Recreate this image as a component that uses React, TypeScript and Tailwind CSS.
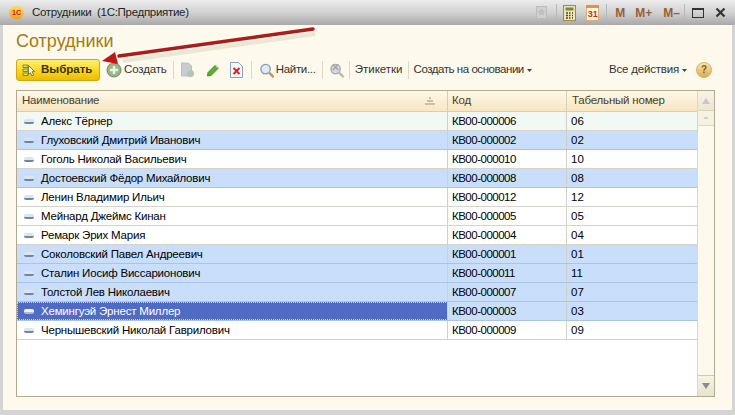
import React from "react";

const rows: [string, string, string, string][] = [
  ["Алекс Тёрнер", "КВ00-000006", "06", "tint"],
  ["Глуховский Дмитрий Иванович", "КВ00-000002", "02", "sel"],
  ["Гоголь Николай Васильевич", "КВ00-000010", "10", "plain"],
  ["Достоевский Фёдор Михайлович", "КВ00-000008", "08", "sel"],
  ["Ленин Владимир Ильич", "КВ00-000012", "12", "plain"],
  ["Мейнард Джеймс Кинан", "КВ00-000005", "05", "plain"],
  ["Ремарк Эрих Мария", "КВ00-000004", "04", "plain"],
  ["Соколовский Павел Андреевич", "КВ00-000001", "01", "sel"],
  ["Сталин Иосиф Виссарионович", "КВ00-000011", "11", "sel"],
  ["Толстой Лев Николаевич", "КВ00-000007", "07", "sel"],
  ["Хемингуэй Эрнест Миллер", "КВ00-000003", "03", "cur"],
  ["Чернышевский Николай Гаврилович", "КВ00-000009", "09", "plain"],
];

function Sep() {
  return <div className="w-px h-[18px] bg-[#e0d8c0] shrink-0" />;
}

function Caret() {
  return <svg width="5" height="3" viewBox="0 0 5 3" className="ml-[3px] shrink-0"><path d="M0 0h5L2.500 3z" fill="#444" /></svg>;
}

function Minus({ light }: { light?: boolean }) {
  return (
    <span className={`w-[10px] h-[5px] rounded-[2px] shrink-0 border-b-2 ${light ? "bg-[#eef2fa] border-[#a8b8e4]" : "bg-[#dde4ee] border-[#6c86a6]"}`} />
  );
}

function Row({ r }: { r: [string, string, string, string] }) {
  const [name, code, num, kind] = r;
  const bg = kind === "sel" ? "bg-[#c8defa]" : kind === "tint" ? "bg-[#f2f9f4]" : kind === "cur" ? "bg-[#c8defa]" : "bg-white";
  const line = kind === "plain" || kind === "tint" ? "border-[#d4d4cc]" : "border-[#a9c4e4]";
  return (
    <div className={`flex h-[19px] border-b ${bg} ${line} text-black`}>
      <div className={`w-[431px] shrink-0 flex items-center pl-[7px] gap-[7px] border-r border-[#d0d0c8] tracking-[-0.2px] ${kind === "cur" ? "bg-[#4f6bc4] text-white outline-1 -outline-offset-1 outline-dotted outline-[#c9d3ee]" : ""}`}>
        <Minus light={kind === "cur"} />
        <span className="whitespace-nowrap pt-[2px]">{name}</span>
      </div>
      <div className="w-[119px] shrink-0 flex items-center pl-[4px] pt-[2px] border-r border-[#d0d0c8] tracking-[-0.5px]">{code}</div>
      <div className="flex-1 flex items-center pl-[4px] pt-[2px]">{num}</div>
    </div>
  );
}

function Scrollbar() {
  return (
    <div className="w-[17px] shrink-0 flex flex-col bg-[#fdf9ec] border-l border-[#dcd8c8]">
      <div className="h-[20px] flex items-center justify-center border-b border-[#d8d2bc] bg-gradient-to-b from-[#f8f4e4] to-[#ece6d2]">
        <svg width="8" height="6" viewBox="0 0 8 6"><path d="M4 0l4 6H0z" fill="#c6c8cc" /></svg>
      </div>
      <div className="h-[15px] flex items-center justify-center border-b border-[#ddd8c4] bg-[#f6f2e2]">
        <span className="w-[4px] h-[2px] bg-[#d4cfbc]" />
      </div>
      <div className="flex-1" />
      <div className="h-[21px] flex items-center justify-center border-t border-[#cfcab4] bg-gradient-to-b from-[#f8f4e4] to-[#e8e2ce]">
        <svg width="8" height="6" viewBox="0 0 8 6"><path d="M0 0h8L4 6z" fill="#8a8a8a" /></svg>
      </div>
    </div>
  );
}

export default function App() {
  return (
    <div className="relative w-[735px] h-[415px] overflow-hidden bg-[#d4d4d4] text-[11.5px] leading-none text-[#333]" style={{ fontFamily: '"Liberation Sans", Arial, sans-serif' }}>
      {/* title bar */}
      <div className="h-[25px] flex items-center bg-gradient-to-b from-[#ececec] via-[#d2d2d2] to-[#a8a8a8]">
        <div className="w-[32px] flex justify-center pl-[1px] shrink-0">
          <span className="w-[15px] h-[13px] rounded-full bg-gradient-to-b from-[#ffdc60] to-[#f0a020] flex items-center justify-center text-[7px] font-bold text-[#c02010]">1С</span>
        </div>
        <span className="text-[#222] whitespace-nowrap tracking-[-0.3px]">Сотрудники &nbsp;(1С:Предприятие)</span>
        <div className="ml-auto flex items-center h-full">
          <svg width="13" height="15" viewBox="0 0 13 15"><path d="M1.500 1.500h10v12h-10z" fill="#d0d0d0" stroke="#bcbcbc" /><path d="M6.500 4l1 2 2 .3-1.500 1.400.4 2.100-1.900-1-1.900 1 .4-2.100L3.500 6.300l2-.3z" fill="#c4c4c4" stroke="#aaa" strokeWidth=".5" /></svg>
          <div className="w-px h-[18px] bg-[#b8b8b8] ml-[8px]" />
          <svg width="13" height="16" viewBox="0 0 13 16" className="ml-[6px]"><rect x=".5" y=".5" width="12" height="15" fill="#f2e6b0" stroke="#a08a40" /><rect x="2.500" y="2.500" width="8" height="3" fill="#6e8a50" /><path d="M3 8h2M6 8h1.500M9 8h1M3 10.500h2M6 10.500h1.500M9 10.500h1M3 13h2M6 13h1.500M9 13h1" stroke="#444" strokeWidth="1.300" /></svg>
          <span className="relative ml-[10px] w-[13px] h-[16px] bg-[#fff5dc] border border-[#d8b080] flex items-end justify-center text-[9px] text-[#c83010] font-bold leading-[11px]">31<span className="absolute -top-[1px] left-[-1px] right-[-1px] h-[3px] bg-[#e89040]" /></span>
          <div className="w-px h-[18px] bg-[#b8b8b8] ml-[7px]" />
          <div className="flex items-center text-[#96603a] font-bold text-[12px] ml-[8px]">
            <span>M</span>
            <span className="ml-[10px]">M+</span>
            <span className="ml-[11px]">M–</span>
          </div>
          <div className="w-px h-[18px] bg-[#b8b8b8] ml-[4px]" />
          <span className="w-[12px] h-[10px] border border-[#333] border-t-2 ml-[7px]" />
          <svg width="11" height="11" viewBox="0 0 11 11" className="ml-[11px] mr-[9px]"><path d="M1.500 1.500l8 8M9.500 1.500l-8 8" stroke="#333" strokeWidth="2.200" /></svg>
        </div>
      </div>

      {/* window body */}
      <div className="mx-[3px] h-[385px] w-[729px] bg-[#fdf9ec] flex flex-col px-[13px]">
        <div className="h-[31px] flex items-end text-[18px] text-[#a67c10] pb-[6px]">Сотрудники</div>

        {/* toolbar */}
        <div className="h-[22px] mt-[3px] flex items-center">
          <div className="w-[84px] h-[22px] rounded-[3px] border border-[#d0a810] bg-gradient-to-b from-[#fff070] via-[#fad820] to-[#eebb00] flex items-center pl-[5px] gap-[4px] font-bold text-[#3a3000] shrink-0">
            <svg width="15" height="15" viewBox="0 0 15 15"><path d="M1 2h5v2.500H1zM1 6h5v2.500H1zM1 10h5v2.500H1z" fill="#d8e070" stroke="#6a7a20" strokeWidth=".8" /><path d="M6.500 2.500l6 6-2.500.3 1.600 3.200-1.700.8-1.500-3.200L6.500 11.500z" fill="#fff" stroke="#5a6a20" strokeWidth=".8" /></svg>
            Выбрать
          </div>
          <svg width="16" height="16" viewBox="0 0 16 16" className="ml-[6px] shrink-0"><circle cx="8" cy="8" r="7" fill="#9ab58c" stroke="#77856e" /><path d="M8 4v8M4 8h8" stroke="#eef6e0" strokeWidth="2.400" /></svg>
          <span className="ml-[2px] whitespace-nowrap tracking-[-0.15px]">Создать</span>
          <div className="ml-[6px]"><Sep /></div>
          <svg width="15" height="16" viewBox="0 0 15 16" className="ml-[6px] shrink-0"><path d="M1.500 1h7l3 3v10h-10z" fill="#c4cdd2" stroke="#b8bfc2" /><circle cx="10.500" cy="11.500" r="3.500" fill="#b6c4b4" /></svg>
          <svg width="14" height="14" viewBox="0 0 14 14" className="ml-[11px] shrink-0"><path d="M2 9.500L9.500 2l3 3L5 12.500l-3.500.5z" fill="#5cb030" stroke="#2f7a1c" strokeWidth=".8" /><path d="M9.500 2l3 3" stroke="#cfe8a0" strokeWidth="1.200" /></svg>
          <svg width="13" height="16" viewBox="0 0 13 16" className="ml-[10px] shrink-0"><path d="M.5.500h8l4 4v11H.5z" fill="#f5f7fb" stroke="#8ea0bc" /><path d="M3.500 6l6 6M9.500 6l-6 6" stroke="#cc2a20" strokeWidth="2" /></svg>
          <div className="ml-[8px]"><Sep /></div>
          <svg width="16" height="17" viewBox="0 0 17 17" className="ml-[7px] shrink-0"><circle cx="7" cy="7" r="5" fill="#dcebf8" stroke="#8a9aac" strokeWidth="1.400" /><path d="M11 11l4.500 4.500" stroke="#c89048" strokeWidth="2.400" /></svg>
          <span className="ml-[1px] whitespace-nowrap tracking-[-0.3px]">Найти...</span>
          <div className="ml-[6px]"><Sep /></div>
          <svg width="16" height="17" viewBox="0 0 17 17" className="ml-[6px] shrink-0"><circle cx="7" cy="7" r="5" fill="#d4d8da" stroke="#a8aeb2" strokeWidth="1.400" /><path d="M11 11l4.500 4.500" stroke="#bcb8b0" strokeWidth="2.400" /><path d="M4 2l6 6M10 2L4 8" stroke="#a8a0a0" strokeWidth="1.400" /></svg>
          <div className="ml-[4px]"><Sep /></div>
          <span className="ml-[5px] whitespace-nowrap">Этикетки</span>
          <div className="ml-[5px]"><Sep /></div>
          <span className="ml-[5px] whitespace-nowrap tracking-[-0.45px]">Создать на основании</span>
          <Caret />
          <span className="ml-auto whitespace-nowrap tracking-[-0.2px]">Все действия</span>
          <Caret />
          <span className="ml-[9px] mr-[7px] w-[16px] h-[16px] rounded-full bg-gradient-to-b from-[#fbe8b0] to-[#e0a850] border border-[#d8b060] flex items-center justify-center text-[10px] font-bold text-[#7a5a20]">?</span>
        </div>

        {/* table */}
        <div className="mt-[9px] h-[307px] w-[699px] flex border border-[#b0aa90] bg-white">
          <div className="flex-1 flex flex-col min-w-0">
            <div className="h-[21px] flex items-stretch bg-gradient-to-b from-[#fdf8ea] to-[#f8e6c0] border-b border-[#d8ceb0] text-[#4a4020] tracking-[-0.2px]">
              <div className="w-[431px] flex items-center pl-[5px] pr-[11px] border-r border-[#d8ceb0] shrink-0">
                <span>Наименование</span>
                <svg width="12" height="8" viewBox="0 0 12 8" className="ml-auto"><path d="M5 0h2v2H5zM3 3h6v2H3zM1 6h10v2H1z" fill="#c8c0a4" /></svg>
              </div>
              <div className="w-[119px] flex items-center pl-[4px] border-r border-[#d8ceb0] shrink-0">Код</div>
              <div className="flex-1 flex items-center pl-[5px]">Табельный номер</div>
            </div>
            {rows.map((r) => <Row key={r[1]} r={r} />)}
          </div>
          <Scrollbar />
        </div>
      </div>

      {/* annotation arrow */}
      <svg className="absolute left-[95px] top-[22px] pointer-events-none" width="230" height="50" viewBox="0 0 230 50">
        <path d="M218 8 L26 35" stroke="#e4e0cc" strokeWidth="4" opacity=".7" transform="translate(2,4)" />
        <path d="M218 7 L24 34" stroke="#ab1c1c" strokeWidth="3.500" strokeLinecap="round" />
        <path d="M7 39 L20 30 L23 42z" fill="#c01818" />
      </svg>
    </div>
  );
}
